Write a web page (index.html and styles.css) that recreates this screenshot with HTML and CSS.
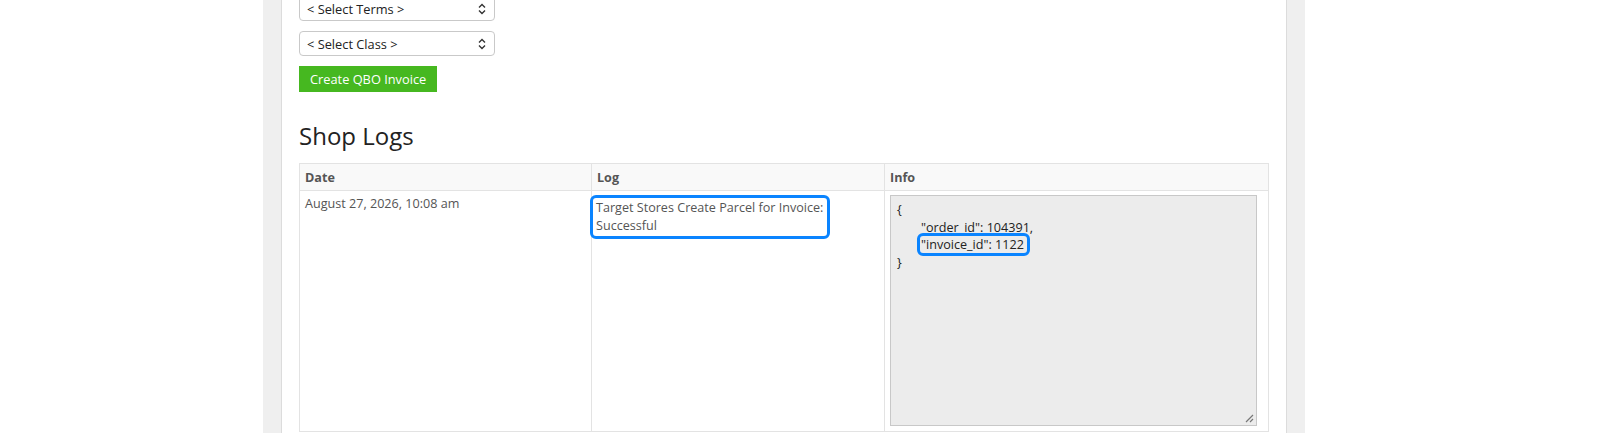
FILE: index.html
```html
<!DOCTYPE html>
<html lang="en">
<head>
    <meta charset="UTF-8">
    <meta name="viewport" content="width=device-width, initial-scale=1.0">
    <title>Shop Logs</title>
    <link rel="stylesheet" href="styles.css">
</head>
<body>

    <div class="page">
        <div class="panel">
            <div class="form">
                <div class="select">
                    <span>&lt; Select Terms &gt;</span>
                    <svg width="8" height="12" viewBox="0 0 8 12"><path d="M1 4.5 L4 1.5 L7 4.5 M1 7.5 L4 10.5 L7 7.5" fill="none" stroke="#333" stroke-width="1.4"/></svg>
                </div>
                <div class="select">
                    <span>&lt; Select Class &gt;</span>
                    <svg width="8" height="12" viewBox="0 0 8 12"><path d="M1 4.5 L4 1.5 L7 4.5 M1 7.5 L4 10.5 L7 7.5" fill="none" stroke="#333" stroke-width="1.4"/></svg>
                </div>
                <button class="btn-crear">Create QBO Invoice</button>
            </div>

            <h2 class="titulo">Shop Logs</h2>

            <table class="logs">
                <thead>
                    <tr>
                        <th class="col-fecha">Date</th>
                        <th class="col-log">Log</th>
                        <th>Info</th>
                    </tr>
                </thead>
                <tbody>
                    <tr>
                        <td>August 27, 2026, 10:08 am</td>
                        <td><span class="marca marca-log">Target Stores Create Parcel for Invoice: Successful</span></td>
                        <td>
                            <div class="info-box">
<div class="linea">{</div>
<div class="linea sangria">"order_id": 104391,</div>
<div class="linea sangria"><span class="marca marca-id">"invoice_id": 1122</span></div>
<div class="linea">}</div>
                                <svg class="grip" width="10" height="10" viewBox="0 0 10 10"><path d="M9 2 L2 9 M9 6 L6 9" stroke="#777" stroke-width="1.2"/></svg>
                            </div>
                        </td>
                    </tr>
                </tbody>
            </table>
        </div>
    </div>

</body>
</html>
```

FILE: styles.css
```css
body {
    margin: 0;
    padding: 0;
    background: #fff;
    font-family: 'Open Sans', 'Noto Sans', sans-serif;
    font-size: 12.6px;
    color: #555;
    height: 437px;
    overflow: hidden;
}

.page {
    margin-left: 263px;
    width: 1042px;
    box-sizing: border-box;
    padding: 0 18px;
    background: #efefef;
    height: 437px;
}

.panel {
    background: #fff;
    border-left: 1px solid #dcdcdc;
    border-right: 1px solid #dcdcdc;
    padding: 0 17px;
    height: 100%;
}

.form {
    display: flex;
    flex-direction: column;
    align-items: flex-start;
    gap: 10px;
    margin-top: -4px;
}

.select {
    width: 196px;
    height: 25px;
    box-sizing: border-box;
    border: 1px solid #c9c9c9;
    border-radius: 4px;
    background: #fff;
    display: flex;
    align-items: center;
    justify-content: space-between;
    padding: 0 8px 0 7px;
    color: #222;
    font-size: 12.8px;
}

.btn-crear {
    height: 26px;
    padding: 0 11px;
    background: #46b820;
    border: none;
    color: #fff;
    font-family: inherit;
    font-size: 12.8px;
}

.titulo {
    margin: 28px 0 0 0;
    font-size: 24px;
    font-weight: 400;
    line-height: 32px;
    color: #222;
}

.logs {
    margin-top: 11px;
    width: 970px;
    border-collapse: collapse;
    border: 1px solid #e3e3e3;
}

.logs th, .logs td {
    border: 1px solid #e3e3e3;
    text-align: left;
    vertical-align: top;
    padding: 5px 5px;
    line-height: 17px;
}

.logs th {
    background: #f9f9f9;
    font-weight: 700;
    color: #555;
    padding: 5px 5px 4px;
}

.logs td {
    padding-top: 4px;
}

.col-fecha {
    width: 281px;
}

.col-log {
    width: 282px;
}

.marca {
    border: 3px solid #0a84ff;
    border-radius: 6px;
    box-sizing: border-box;
}

.marca-log {
    display: inline-block;
    width: 240px;
    margin-left: -7px;
    padding: 1px 3px 1px 3px;
    line-height: 18px;
}

.info-box {
    position: relative;
    width: 367px;
    height: 231px;
    box-sizing: border-box;
    background: #ececec;
    border: 1px solid #c8c8c8;
    padding: 5px 6px;
    color: #222;
    line-height: 17.5px;
}

.sangria {
    padding-left: 24px;
}

.marca-id {
    margin-left: -4px;
    padding: 0 3px 0 1px;
}

.grip {
    position: absolute;
    right: 2px;
    bottom: 2px;
}
```
